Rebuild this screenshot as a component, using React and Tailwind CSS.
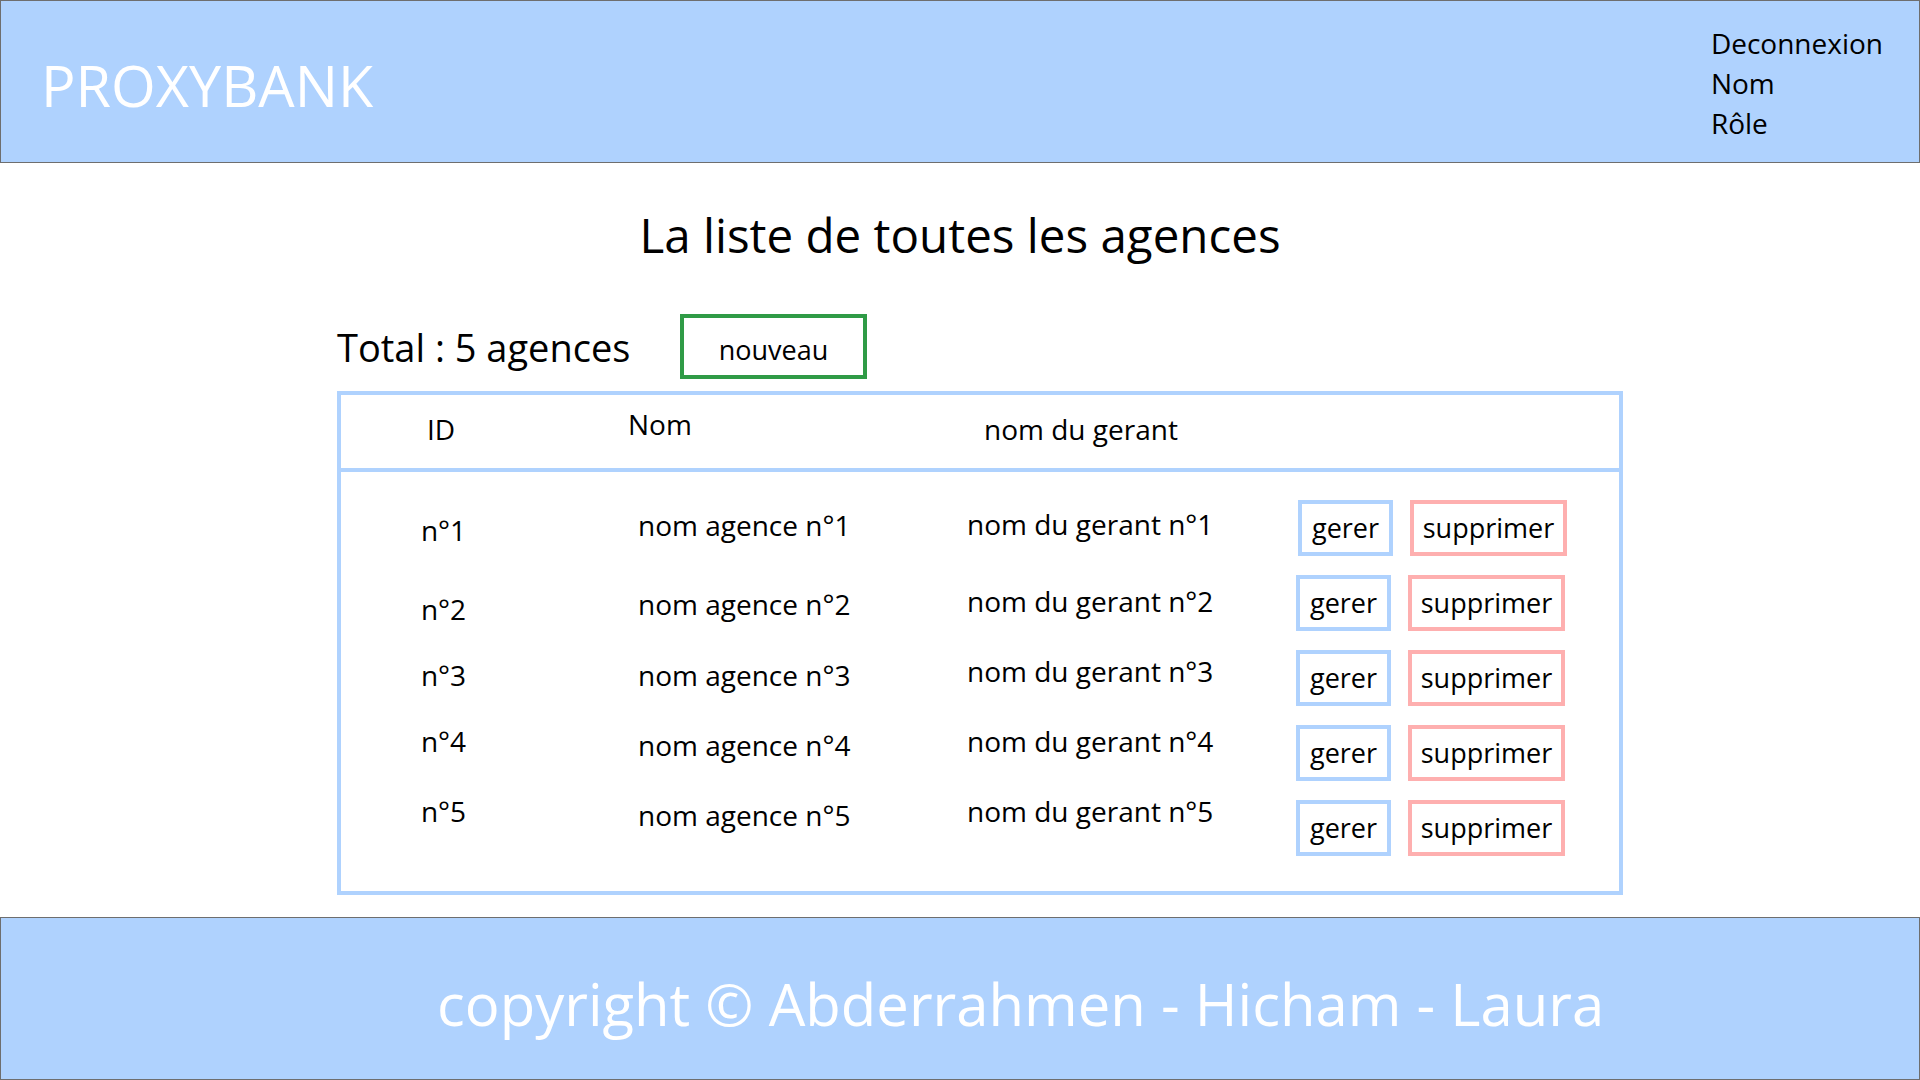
import React from "react";

// each line of the mockup sits a little off the button centre, kept as in the slide
const rows = [
  { n: 1, id: "mt-[11px]", agence: "mt-[6px]", gerant: "mt-[5px]", btn: "ml-[2px]" },
  { n: 2, id: "mt-[15px]", agence: "mt-[10px]", gerant: "mt-[7px]", btn: "" },
  { n: 3, id: "mt-[6px]", agence: "mt-[6px]", gerant: "mt-[2px]", btn: "" },
  { n: 4, id: "-mt-[3px]", agence: "mt-[1px]", gerant: "-mt-[3px]", btn: "" },
  { n: 5, id: "-mt-[8px]", agence: "-mt-[4px]", gerant: "-mt-[8px]", btn: "" },
];

const Header = () => (
  <header className="h-[163px] shrink-0 bg-[#afd2fe] border border-[#6e6e6e] flex justify-between pl-[40px] pr-[36px]">
    <div className="self-center mt-[8px] text-[57.5px] leading-none text-white">PROXYBANK</div>
    <nav className="pt-[22px] text-[28px] leading-[40px] text-black flex flex-col">
      <span>Deconnexion</span>
      <span>Nom</span>
      <span>Rôle</span>
    </nav>
  </header>
);

const ActionButtons = ({ className }) => (
  <div className={`flex gap-[17px] self-center ${className}`}>
    <button className="w-[95px] h-[56px] border-4 border-[#afd2fe] text-[27px] leading-none text-black">
      gerer
    </button>
    <button className="w-[157px] h-[56px] border-4 border-[#feafaf] text-[27px] leading-none text-black">
      supprimer
    </button>
  </div>
);

const AgencesTable = () => (
  <div className="w-[1286px] border-4 border-[#afd2fe]">
    <div className="h-[77px] flex items-center text-[28px] text-black border-b-4 border-[#afd2fe]">
      <div className="w-[200px] text-center -mt-[6px]">ID</div>
      <div className="w-[400px] pl-[87px] -mt-[16px]">Nom</div>
      <div className="pl-[43px] -mt-[6px]">nom du gerant</div>
    </div>
    <div className="pt-[28px] pb-[36px] flex flex-col gap-[20px]">
      {rows.map((r) => (
        <div key={r.n} className="h-[55px] flex items-start text-[28px] leading-[38px] text-black">
          <div className={`w-[200px] pl-[5px] text-center ${r.id}`}>n°{r.n}</div>
          <div className={`w-[400px] pl-[97px] ${r.agence}`}>nom agence n°{r.n}</div>
          <div className={`w-[355px] pl-[26px] ${r.gerant}`}>nom du gerant n°{r.n}</div>
          <ActionButtons className={r.btn} />
        </div>
      ))}
    </div>
  </div>
);

export default function App() {
  return (
    <div
      className="w-[1920px] h-[1080px] flex flex-col bg-white overflow-hidden"
      style={{ fontFamily: '"Open Sans", "Noto Sans", sans-serif' }}
    >
      <Header />
      <main className="flex-1 flex flex-col">
        <h1 className="mt-[40px] text-center text-[47.5px] leading-[64px] text-black">
          La liste de toutes les agences
        </h1>
        <div className="pl-[337px] mt-[47px] flex flex-col gap-[12px]">
          <div className="flex items-center">
            <span className="w-[343px] text-[38px] leading-none text-black">Total : 5 agences</span>
            <button className="w-[187px] h-[65px] border-4 border-[#2f9b46] pt-[6px] text-[27px] leading-none text-black">
              nouveau
            </button>
          </div>
          <AgencesTable />
        </div>
      </main>
      <footer className="h-[163px] shrink-0 bg-[#afd2fe] border border-[#6e6e6e] flex items-center pl-[436px]">
        <span className="mt-[10px] text-[58px] leading-none text-white">
          copyright © Abderrahmen - Hicham - Laura
        </span>
      </footer>
    </div>
  );
}
